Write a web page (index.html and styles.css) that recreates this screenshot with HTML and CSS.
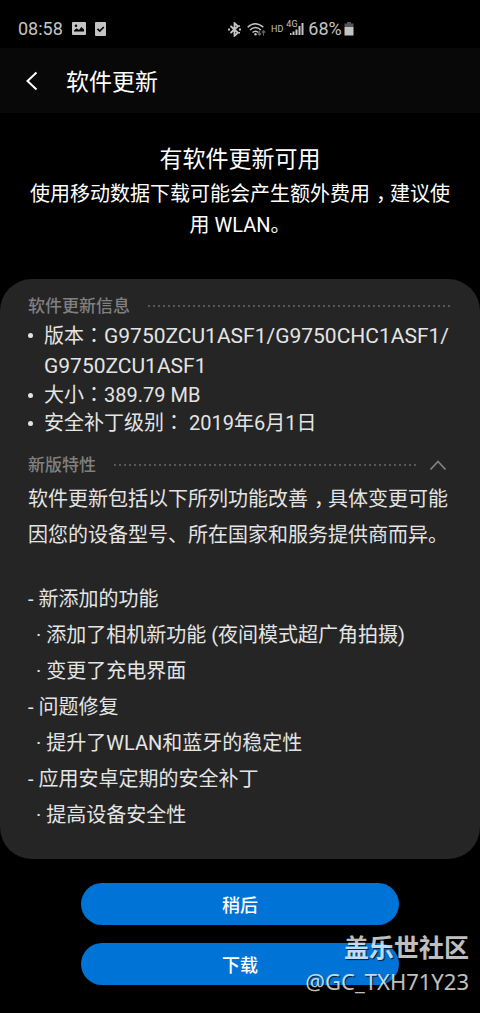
FILE: index.html
```html
<!DOCTYPE html>
<html lang="zh-CN">
<head>
<meta charset="utf-8">
<meta name="viewport" content="width=device-width, initial-scale=1">
<title>软件更新</title>
<link rel="stylesheet" href="styles.css">
</head>
<body>
<div class="status">
  <div class="status-group status-left">
    <span>08:58</span>
    <svg width="14" height="14" viewBox="0 0 14 14" aria-hidden="true"><path fill="currentColor" fill-rule="evenodd" d="M1 0h12a1 1 0 0 1 1 1v11a1 1 0 0 1-1 1H1a1 1 0 0 1-1-1V1a1 1 0 0 1 1-1zM2 9.500h10V7.500L9.300 5 7 8 4.500 6.200 2 8.500zM4 2.500a1.300 1.300 0 1 0 0 2.600 1.300 1.300 0 0 0 0-2.600z"/></svg>
    <svg width="11" height="14" viewBox="0 0 11 14" aria-hidden="true"><rect width="11" height="14" rx="1" fill="currentColor"/><path d="M2.500 6.800l2.300 2.300L8.800 5" fill="none" stroke="#000" stroke-width="1.700"/></svg>
  </div>
  <div class="status-group status-right">
    <svg width="13" height="15" viewBox="0 0 13 15" aria-hidden="true"><path d="M2.500 4l7.500 6.800-3.500 3V1.200l3.500 3L2.500 11" fill="none" stroke="currentColor" stroke-width="1.800"/><path fill="currentColor" d="M0 6.500h2v2H0zM11 6.500h2v2h-2zM10.500 3.300H12v1.500h-1.500zM10.500 10H12v1.500h-1.500z"/></svg>
    <svg class="wifi" width="20" height="15" viewBox="0 0 20 15" aria-hidden="true"><g fill="none" stroke="currentColor" stroke-width="1.500"><path d="M.700 5.200q7.300-7 15.600 0"/><path d="M3 8q5.500-5 11 0"/><path d="M5.500 10.500q3-2.600 6 0"/></g><circle cx="8.500" cy="12.300" r="1.200" fill="currentColor"/><path d="M12.500 8.500v4.500M10.800 11.500l1.700 1.700 1.700-1.700M16.500 13.500V9M14.800 10.500l1.700-1.700 1.700 1.700" fill="none" stroke="#666" stroke-width="1.200"/></svg>
    <span class="hd">HD</span>
    <span class="signal"><span class="net">4G</span><svg width="15" height="14" viewBox="0 0 15 14" aria-hidden="true"><path fill="currentColor" d="M1 11h1.500v2H1zM3.500 9.500h2V13h-2zM6.500 7.500h2V13h-2zM9.500 4h2v9h-2zM12.500 1h2v12h-2z"/></svg></span>
    <span>68%</span>
    <svg class="battery" width="10" height="14" viewBox="0 0 10 14" aria-hidden="true"><path fill="#555" d="M3 0h4v1.500h2.500V5h-9V1.500H3z"/><path fill="currentColor" d="M.500 5h9v8.500h-9z"/></svg>
  </div>
</div>

<header class="bar">
  <button class="back" type="button" aria-label="返回"><svg width="12" height="20" viewBox="0 0 12 20" aria-hidden="true"><path d="M10.500 1.500L1.500 10l9 8.500" fill="none" stroke="currentColor" stroke-width="2"/></svg></button>
  <h1 class="title">软件更新</h1>
</header>

<main>
  <section class="intro">
    <h2 class="headline">有软件更新可用</h2>
    <p class="note">使用移动数据下载可能会产生额外费用<span class="comma">，</span>建议使用 WLAN。</p>
  </section>

  <section class="card">
    <div class="section-head"><h3 class="label">软件更新信息</h3><span class="dots"></span></div>
    <ul class="info">
      <li>版本<span class="mid" lang="zh-Hant">：</span><span class="version">G9750ZCU1ASF1/G9750CHC1ASF1/<wbr>G9750ZCU1ASF1</span></li>
      <li>大小<span class="mid" lang="zh-Hant">：</span>389.79 MB</li>
      <li>安全补丁级别<span class="mid" lang="zh-Hant">：</span> 2019年6月1日</li>
    </ul>
    <div class="section-head"><h3 class="label">新版特性</h3><span class="dots"></span><button class="fold" type="button" aria-label="收起"><svg width="18" height="11" viewBox="0 0 18 11" aria-hidden="true"><path d="M1.500 9.500L9 1.500l7.500 8" fill="none" stroke="currentColor" stroke-width="1.800"/></svg></button></div>
    <div class="notes">
      <p class="lead">软件更新包括以下所列功能改善<span class="comma">，</span>具体变更可能因您的设备型号、所在国家和服务提供商而异。</p>
      <p>- 新添加的功能</p>
      <p class="sub">· 添加了相机新功能 (夜间模式超广角拍摄)</p>
      <p class="sub">· 变更了充电界面</p>
      <p>- 问题修复</p>
      <p class="sub">· 提升了WLAN和蓝牙的稳定性</p>
      <p>- 应用安卓定期的安全补丁</p>
      <p class="sub">· 提高设备安全性</p>
    </div>
  </section>

  <div class="actions">
    <button class="action" type="button">稍后</button>
    <button class="action" type="button">下载</button>
  </div>
</main>

<div class="watermark"><div class="brand">盖乐世社区</div><div class="user">@GC_TXH71Y23</div></div>
</body>
</html>
```

FILE: styles.css
```css
* {
  box-sizing: border-box;
}

body {
  margin: 0;
  min-height: 100vh;
  position: relative;
  background: #000;
  color: #fff;
  font-family: Roboto, "Noto Sans CJK SC", sans-serif;
  font-size: 20px;
}

h1, h2, h3, p, ul {
  margin: 0;
  padding: 0;
  font-weight: 400;
}

button {
  border: 0;
  padding: 0;
  background: none;
  color: inherit;
  font-family: inherit;
}

svg {
  display: block;
  flex: none;
}

.mid {
  font-family: Roboto, "Noto Sans CJK TC", sans-serif;
  line-height: 20px;
}

.comma {
  padding-left: 6px;
  margin-right: -6px;
}

.status {
  display: grid;
  grid-template-columns: 210px 1fr;
  height: 48px;
  padding: 10px 18px 0;
  color: #c4c4c4;
  font-size: 18px;
  line-height: 38px;
}

.status-group {
  display: flex;
  align-items: center;
}

.status-left {
  gap: 9px;
}

.status-right {
  gap: 4px;
}

.wifi {
  margin-left: 2px;
}

.hd {
  font-size: 9px;
}

.signal {
  position: relative;
  padding-left: 2px;
}

.net {
  position: absolute;
  left: -1px;
  top: -3px;
  font-size: 9px;
  line-height: 10px;
}

.battery {
  margin-left: -2px;
}

.bar {
  display: flex;
  align-items: center;
  gap: 28px;
  height: 65px;
  padding-left: 26px;
  background: #080808;
}

.title,
.headline {
  font-size: 23px;
  line-height: 32px;
}

.title {
  padding-top: 4px;
}

.intro {
  padding: 31px 28px 38px;
  text-align: center;
}

.note {
  padding-top: 3px;
  line-height: 31px;
}

.card {
  padding: 13px 28px 26px;
  border-radius: 32px;
  background: #252525;
  color: #e4e4e4;
}

.section-head {
  display: flex;
  align-items: center;
  gap: 18px;
  height: 28px;
  color: #808080;
}

.label {
  font-size: 17px;
  font-weight: 500;
  line-height: 24px;
}

.dots {
  flex: 1;
  height: 2px;
  background: repeating-linear-gradient(90deg, #585858 0 2px, transparent 2px 5px);
}

.fold {
  margin-left: -6px;
  margin-right: 5px;
}

.info {
  padding: 1px 0 0 16px;
  list-style: none;
  line-height: 28px;
}

.info li {
  position: relative;
}

.info li:first-child {
  line-height: 30px;
}

.version {
  font-size: 21px;
}

.info li::before {
  content: "";
  position: absolute;
  left: -16px;
  top: 12px;
  width: 5px;
  height: 5px;
  border-radius: 50%;
  background: currentColor;
}

.info + .section-head {
  margin-top: 14px;
}

.notes {
  padding-top: 2px;
  line-height: 36px;
}

.lead {
  margin-bottom: 28px;
}

.sub {
  padding-left: 8px;
}

.actions {
  display: grid;
  gap: 18px;
  padding: 24px 81px 28px;
}

.action {
  height: 42px;
  border-radius: 21px;
  background: #0074d6;
  font-size: 18px;
  font-weight: 500;
}

.watermark {
  position: absolute;
  right: 11px;
  bottom: 17px;
  color: #fff;
  opacity: 0.75;
  text-align: right;
  text-shadow: 1px 1px 1px #000;
  pointer-events: none;
}

.brand {
  font-size: 25px;
  font-weight: 700;
  line-height: 34px;
}

.user {
  font-family: "Noto Sans", sans-serif;
  font-size: 22px;
  line-height: 30px;
}
```
